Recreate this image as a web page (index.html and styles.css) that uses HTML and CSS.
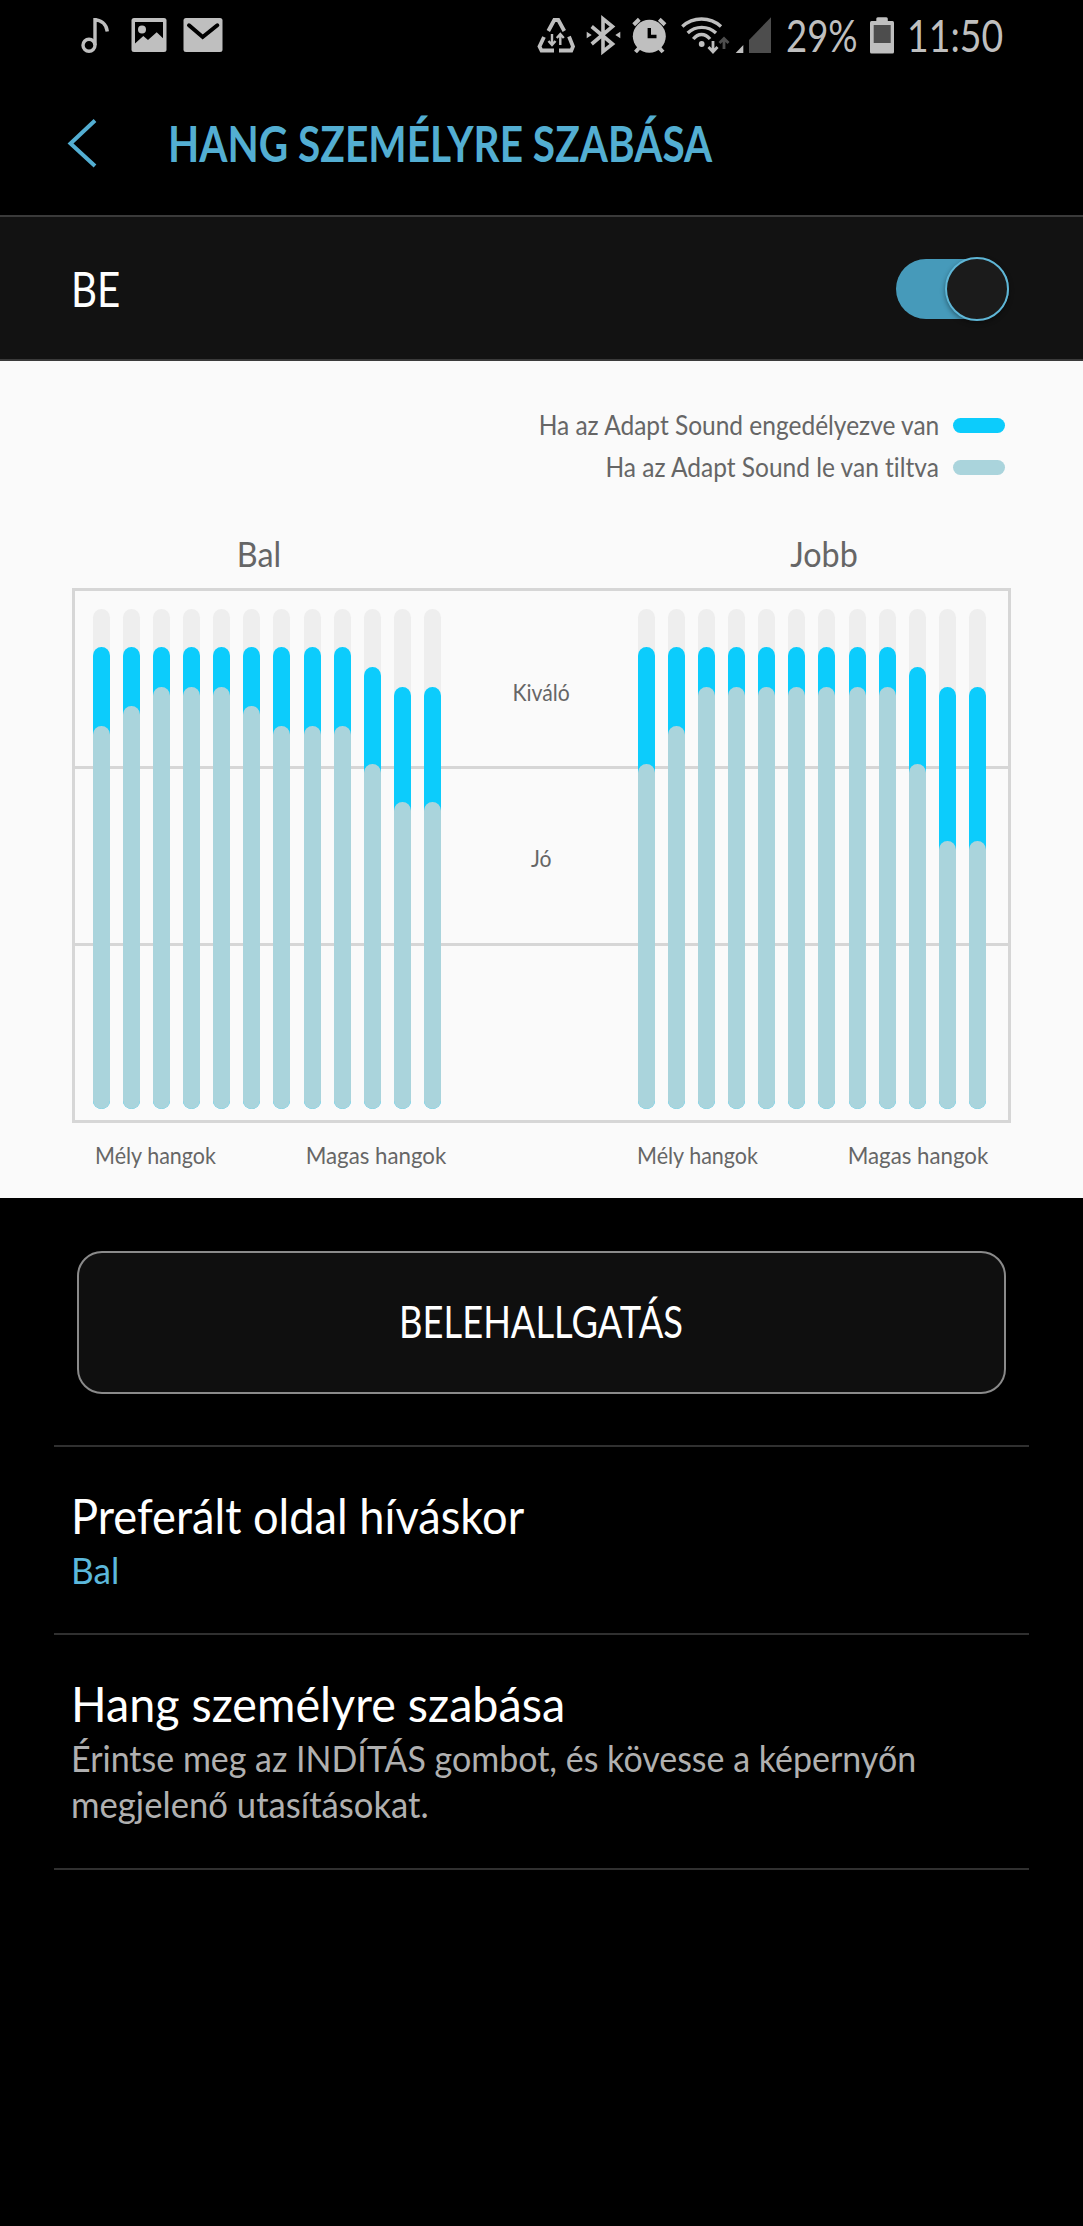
FILE: index.html
```html
<!DOCTYPE html>
<html lang="hu">

<head>
    <meta charset="UTF-8">
    <title>Hang személyre szabása</title>
    <link rel="stylesheet" href="styles.css">
</head>
<body>
    <div class="statusbar">
        <svg class="note" width="28" height="40" viewBox="0 0 28 40">
            <circle cx="8" cy="30.3" r="6" fill="none" stroke="#bfbfbf" stroke-width="3.4"/>
            <path d="M14 30V3M13 4.7C20 5 25.5 9 26.3 16.5" fill="none" stroke="#bfbfbf" stroke-width="3.4"/>
        </svg>
        <svg class="photo" width="36" height="40" viewBox="0 0 36 40">
            <rect x="0.5" y="3" width="35" height="34" rx="2.5" fill="#bfbfbf"/>
            <path d="M4 7H32V23.3L25.7 17.3L17 25L12.3 21L4 28.5Z" fill="#000"/>
            <circle cx="11" cy="14.5" r="4" fill="#bfbfbf"/>
        </svg>
        <svg class="mail" width="40" height="40" viewBox="0 0 40 40">
            <rect x="0.5" y="3" width="39" height="34" rx="2.5" fill="#bfbfbf"/>
            <path d="M6 10.3L19.7 22L34.3 10.3" fill="none" stroke="#000" stroke-width="4" stroke-linecap="round"/>
        </svg>

        <svg class="saver" width="38" height="40" viewBox="0 0 38 40">
            <g fill="none" stroke="#bfbfbf" stroke-width="3.8">
                <path d="M11.3 16L17.3 5H21.3L27.3 16"/>
                <path d="M7 22L2.5 31.5L4.5 35.5H17"/>
                <path d="M32 21.5L36 31.5L34.3 35.5H22"/>
            </g>
            <g fill="none" stroke="#bfbfbf" stroke-width="2.4">
                <path d="M15 19V29M11.5 26L15 30L18.5 26"/>
                <path d="M23.3 30V20M19.8 23L23.3 19L26.8 23"/>
            </g>
        </svg>
        <svg class="bluetooth" width="35" height="40" viewBox="0 0 35 40">
            <path d="M5.7 11.5L26.5 29L17 36.5V3.8L26.5 11.5L5.7 29" fill="none" stroke="#bfbfbf" stroke-width="3.6"/>
            <path d="M0.7 16.8L5.7 20L0.7 23.2ZM34.3 16.8L29.3 20L34.3 23.2Z" fill="#bfbfbf"/>
        </svg>
        <svg class="alarm" width="35" height="40" viewBox="0 0 35 40">
            <path d="M1.7 9.7L7.3 4.3M27.3 4.3L33 9.7M3.5 37L8 32M31 37L26.5 32" stroke="#bfbfbf" stroke-width="4"/>
            <circle cx="17.3" cy="21.3" r="16.5" fill="#bfbfbf"/>
            <path d="M17.3 13V21.5H24.5" fill="none" stroke="#000" stroke-width="3.4"/>
        </svg>
        <svg class="wifi" width="48" height="40" viewBox="0 0 48 40">
            <g fill="none" stroke="#bfbfbf" stroke-width="3.4">
                <path d="M1.3 11.5C12 1.5 29 1.5 40 11.5"/>
                <path d="M6.7 18C14.5 10.5 27 10.5 35 18"/>
                <path d="M12.3 24C17 18 24 18 29 24"/>
            </g>
            <circle cx="20.7" cy="29" r="2.9" fill="#bfbfbf"/>
            <path d="M32 26V37M27.5 32L32 37L36.5 32" fill="none" stroke="#bfbfbf" stroke-width="2.8"/>
            <path d="M43 34V23.5M38.5 28L43 23.5L47.5 28" fill="none" stroke="#4d4d4d" stroke-width="2.8"/>
        </svg>
        <svg class="signal" width="36" height="40" viewBox="0 0 36 40">
            <path d="M0.7 38L8.3 30V38Z" fill="#bfbfbf"/>
            <path d="M14 38V25L36 2.3V38Z" fill="#4d4d4d"/>
        </svg>
        <span class="percent">29%</span>
        <svg class="battery" width="24" height="40" viewBox="0 0 24 40">
            <rect x="6.3" y="2.3" width="11.5" height="6" rx="1.5" fill="#bfbfbf"/>
            <rect x="0" y="6" width="24" height="32.5" rx="1.5" fill="#bfbfbf"/>
            <rect x="3.7" y="10" width="17" height="18" fill="#4d4d4d"/>
        </svg>
        <span class="clock">11:50</span>
    </div>

    <div class="header">
        <svg width="30" height="50" viewBox="0 0 30 50">
            <path d="M28 2.5L3.500 25.500L28 48" fill="none" stroke="#53aed2" stroke-width="4"/>
        </svg>
        <h1>HANG SZEMÉLYRE SZABÁSA</h1>
    </div>

    <div class="switch-row">
        <span class="switch-label">BE</span>
        <div class="switch"><div class="knob"></div></div>
    </div>

    <div class="graph">
        <div class="legend">
            <div class="legend-row"><span>Ha az Adapt Sound engedélyezve van</span><i class="pill on"></i></div>
            <div class="legend-row"><span>Ha az Adapt Sound le van tiltva</span><i class="pill off"></i></div>
        </div>
        <div class="sides">
            <span>Bal</span>
            <span>Jobb</span>
        </div>
        <div class="frame">
            <div class="zones">
                <div class="zone"><span>Kiváló</span></div>
                <div class="zone"><span>Jó</span></div>
                <div class="zone"></div>
            </div>
            <div class="bars" id="left"></div>
            <div class="bars" id="right"></div>
        </div>
        <div class="axis">
            <div class="axis-side"><span class="low">Mély hangok</span><span class="high">Magas hangok</span></div>
            <div class="axis-side"><span class="low">Mély hangok</span><span class="high">Magas hangok</span></div>
        </div>
    </div>

    <button class="listen"><span>BELEHALLGATÁS</span></button>

    <div class="item call-side">
        <h2>Preferált oldal híváskor</h2>
        <p class="value">Bal</p>
    </div>
    <div class="item personalize">
        <h2>Hang személyre szabása</h2>
        <p>Érintse meg az INDÍTÁS gombot, és kövesse a képernyőn</p>
        <p class="last">megjelenő utasításokat.</p>
    </div>

    <script>
        // [engedélyezve, letiltva] magasság px-ben
        let left = [[462,383],[462,403],[462,422],[462,422],[462,422],[462,403],[462,383],[462,383],[462,383],[442,345],[422,307],[422,307]];
        let right = [[462,345],[462,383],[462,422],[462,422],[462,422],[462,422],[462,422],[462,422],[462,422],[442,345],[422,268],[422,268]];

        function draw(id, data){
            let list = "";
            for (let [on, off] of data){
                list += `<div class="bar"><div class="on" style="height:${on}px"></div><div class="off" style="height:${off}px"></div></div>`;
            }
            document.getElementById(id).innerHTML = list;
        }
        draw("left", left);
        draw("right", right);
    </script>
</body>
</html>
```
FILE: styles.css
```css
*{
    box-sizing: border-box;
}

body{
    margin: 0;
    min-height: 2226px;
    background-color: #000;
    color: #fff;
    font-family: Lato, "Open Sans", sans-serif;
    font-variant-ligatures: none;
}

h1, h2, p{
    margin: 0;
    font-weight: 400;
}

span, h1, h2, p{
    white-space: nowrap;
    transform-origin: left center;
}

svg{
    flex-shrink: 0;
    overflow: visible;
}

.statusbar{
    display: flex;
    align-items: center;
    height: 70px;
    padding-left: 81px;
    color: #bfbfbf;
    font-size: 44px;
}

.photo{
    margin-left: 22px;
}

.mail{
    margin-left: 16px;
}

.saver{
    margin-left: 314px;
}

.bluetooth, .alarm{
    margin-left: 11px;
}

.wifi{
    margin-left: 14px;
}

.signal{
    margin-left: 6px;
}

.percent{
    width: 83px;
    margin-left: 15px;
    transform: scaleX(0.83);
}

.battery{
    margin-left: 1px;
}

.clock{
    margin-left: 13px;
    transform: scaleX(0.85);
}

.header{
    display: flex;
    align-items: center;
    height: 145px;
    padding-left: 67px;
}

.header h1{
    margin-left: 71px;
    font-size: 50px;
    font-weight: 700;
    line-height: 60px;
    color: #53aed2;
    transform: scaleX(0.812);
}

.switch-row{
    display: flex;
    align-items: center;
    justify-content: space-between;
    height: 146px;
    padding: 1px 74px 0 71px;
    background-color: #121212;
    border-top: 2px solid #3a3a3a;
    border-bottom: 2px solid #3a3a3a;
}

.switch-label{
    font-size: 48px;
    transform: scaleX(0.84);
}

.switch{
    display: flex;
    align-items: center;
    justify-content: flex-end;
    width: 113px;
    height: 60px;
    border-radius: 30px;
    background-color: #469aba;
}

.knob{
    flex-shrink: 0;
    width: 64px;
    height: 64px;
    border: 2px solid #5fb6d6;
    border-radius: 50%;
    background-color: #1b1b1b;
    box-shadow: 0 2px 5px rgba(0, 0, 0, 0.4);
}

.graph{
    height: 837px;
    padding: 43px 72px 0;
    background-color: #fafafa;
    color: #666;
}

.legend-row{
    display: flex;
    align-items: center;
    justify-content: flex-end;
    gap: 14px;
    height: 42px;
    padding-right: 6px;
    font-size: 26px;
}

.legend-row span{
    transform: scaleX(0.942);
    transform-origin: right center;
}

.pill{
    width: 52px;
    height: 15px;
    border-radius: 8px;
}

.on{
    background-color: #0cccfc;
}

.off{
    background-color: #aad4dc;
}

.sides{
    display: flex;
    justify-content: space-between;
    height: 100px;
    padding-top: 44px;
    font-size: 34px;
    line-height: 44px;
}

.sides span{
    width: 374px;
    text-align: center;
    transform: scaleX(0.95);
    transform-origin: center;
}

.frame{
    position: relative;
    display: flex;
    justify-content: space-between;
    height: 535px;
    padding: 18px 22px 0 18px;
    border: 3px solid #d6d6d6;
}

/* the bars are drawn over the zone lines */
.zones{
    position: absolute;
    inset: 0;
    display: grid;
    grid-template-rows: 178px 177px 1fr;
    font-size: 23px;
}

.zone{
    padding-top: 87px;
    line-height: 28px;
    text-align: center;
    border-bottom: 3px solid #d6d6d6;
}

.zone + .zone{
    padding-top: 75px;
}

.zone:last-child{
    border-bottom: none;
}

.zone span{
    display: inline-block;
    transform: scaleX(0.92);
    transform-origin: center;
}

.bars{
    position: relative;
    display: flex;
    justify-content: space-between;
    width: 348px;
    height: 500px;
}

.bar{
    display: grid;
    align-items: end;
    width: 17px;
    border-radius: 9px;
    background-color: #eee;
    overflow: hidden;
}

.bar div{
    grid-area: 1 / 1;
    border-radius: 9px 9px 0 0;
}

.axis{
    display: flex;
    justify-content: space-between;
    padding: 18px 23px 0;
    font-size: 23px;
    line-height: 28px;
}

.axis-side{
    display: flex;
    justify-content: space-between;
    width: 351px;
}

.low{
    transform: scaleX(0.935);
}

.high{
    transform: scaleX(0.968);
    transform-origin: right center;
}

.listen{
    display: block;
    width: 929px;
    height: 143px;
    margin: 53px 0 51px 77px;
    padding: 0 0 4px;
    border: 2px solid #8a8a8a;
    border-radius: 25px;
    background-color: #0f0f0f;
    color: #fff;
    font-family: inherit;
    font-size: 44px;
}

.listen span{
    display: inline-block;
    transform: scaleX(0.825);
    transform-origin: center;
}

.item{
    margin: 0 54px;
    padding: 38px 0 0 17px;
    border-top: 2px solid #303030;
}

.item h2{
    margin-bottom: 2px;
    font-size: 49px;
    line-height: 60px;
}

.item p{
    font-size: 37px;
    line-height: 46px;
    color: #b0b0b0;
    transform: scaleX(0.918);
}

.item .last{
    transform: scaleX(0.937);
}

.item .value{
    color: #5cb8dc;
    transform: scaleX(0.95);
}

.call-side{
    height: 188px;
}

.call-side h2{
    transform: scaleX(0.923);
}

.personalize{
    height: 237px;
    border-bottom: 2px solid #303030;
}

.personalize h2{
    transform: scaleX(0.953);
}
```
